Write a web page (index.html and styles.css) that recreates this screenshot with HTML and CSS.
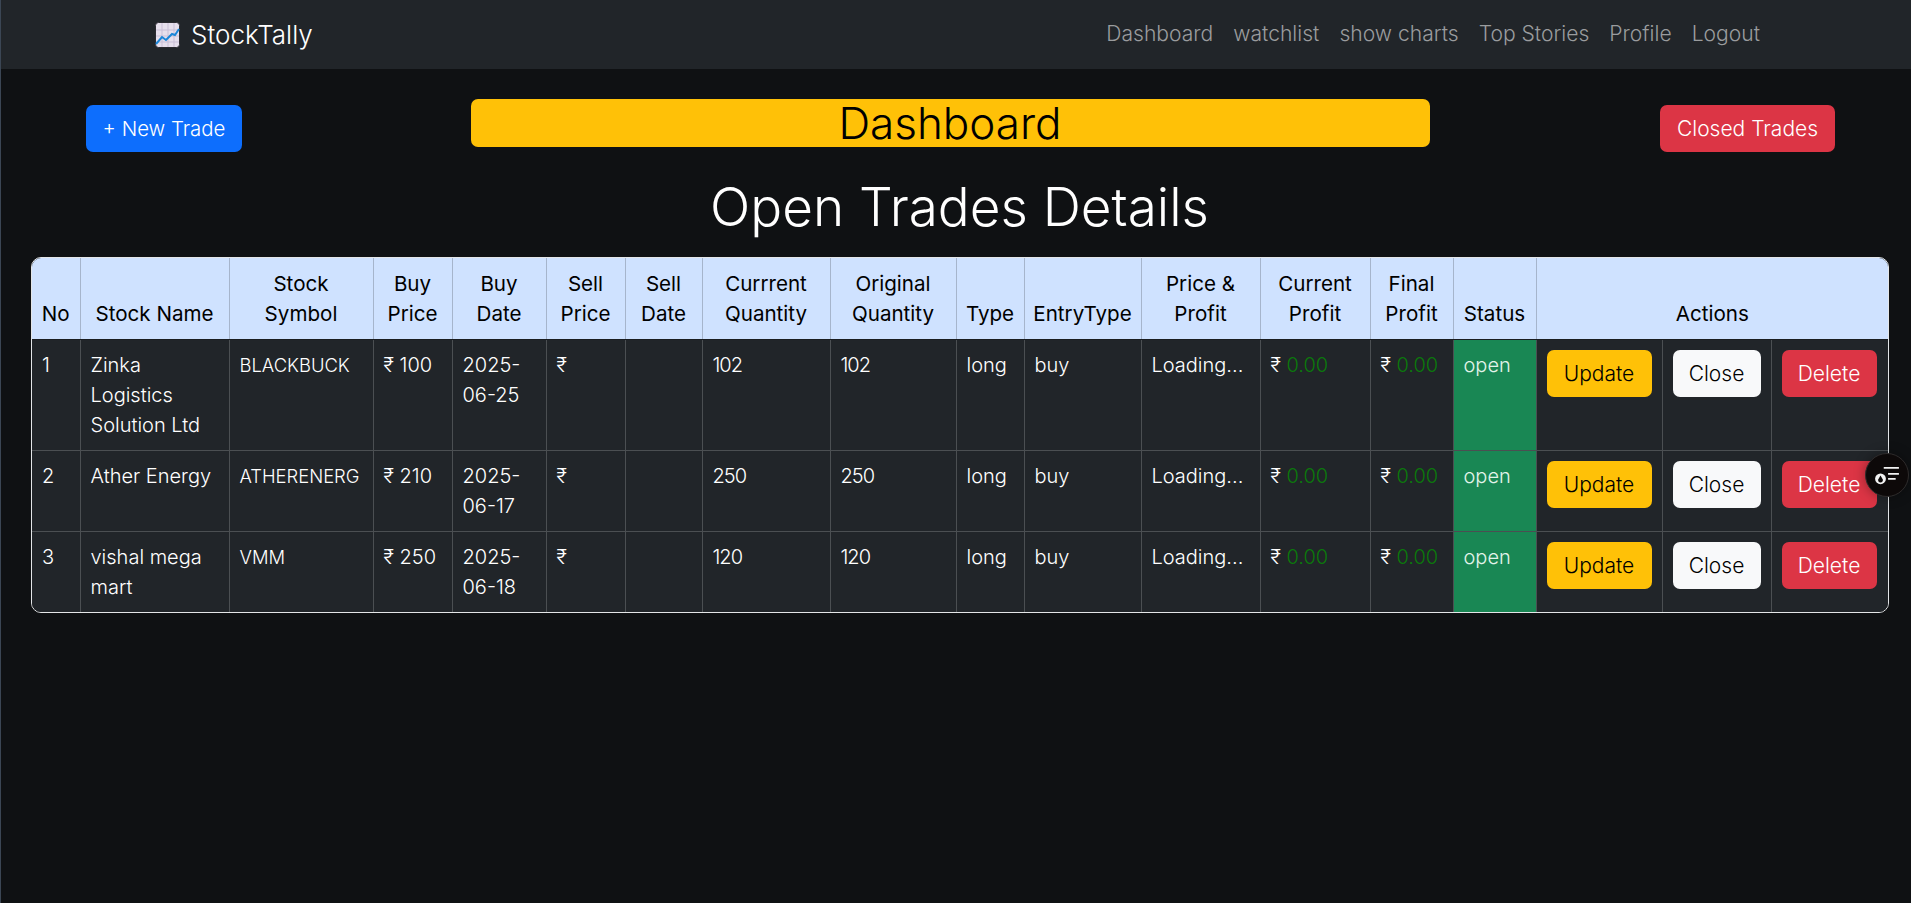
FILE: index.html
```html
<!doctype html>
<html>
  <head>
    <title>StockTally</title>
    <link rel="stylesheet" href="styles.css">
  </head>
  <body>
    <nav class="navbar">
      <a class="brand" href="#">
        <svg class="brand-icon" viewBox="0 0 25 26" width="25" height="26">
          <rect x="0.5" y="0.5" width="24" height="25" rx="3" fill="#e6dfec" stroke="#2b2b30" />
          <path d="M1 8h23M1 14h23M1 20h23M7 1v24M13 1v24M19 1v24" stroke="#c9bfd6" stroke-width="1" fill="none" />
          <path d="M1 22l6-7 4 3 6-6 3 1 4-6" stroke="#1a86d8" stroke-width="2" fill="none" />
        </svg>
        <span>StockTally</span>
      </a>
      <ul class="nav-links">
        <li><a href="#">Dashboard</a></li>
        <li><a href="#">watchlist</a></li>
        <li><a href="#">show charts</a></li>
        <li><a href="#">Top Stories</a></li>
        <li><a href="#">Profile</a></li>
        <li><a href="#">Logout</a></li>
      </ul>
    </nav>

    <div class="top-row">
      <button class="btn btn-blue btn-new">+ New Trade</button>
      <div class="banner">Dashboard</div>
      <button class="btn btn-red btn-closed">Closed Trades</button>
    </div>

    <h1 class="page-title">Open Trades Details</h1>

    <div class="table-wrap">
      <table>
        <colgroup>
          <col class="c-no" /><col class="c-name" /><col class="c-symbol" /><col class="c-buy" />
          <col class="c-date" /><col class="c-sell" /><col class="c-selldate" /><col class="c-qty" />
          <col class="c-orig" /><col class="c-type" /><col class="c-entry" /><col class="c-price" />
          <col class="c-profit" /><col class="c-final" /><col class="c-status" /><col class="c-update" />
          <col class="c-close" /><col class="c-delete" />
        </colgroup>
        <thead>
          <tr>
            <th class="tight">No</th>
            <th class="tight">Stock Name</th>
            <th>Stock Symbol</th>
            <th class="tight">Buy Price</th>
            <th>Buy Date</th>
            <th class="tight">Sell Price</th>
            <th class="tight">Sell Date</th>
            <th class="tight">Currrent Quantity</th>
            <th class="tight">Original Quantity</th>
            <th class="tight">Type</th>
            <th class="tight">EntryType</th>
            <th class="tight">Price &amp; Profit</th>
            <th class="tight">Current Profit</th>
            <th class="tight">Final Profit</th>
            <th class="tight">Status</th>
            <th colspan="3">Actions</th>
          </tr>
        </thead>
        <tbody>
          <tr>
            <td>1</td>
            <td>Zinka Logistics Solution Ltd</td>
            <td class="symbol">BLACKBUCK</td>
            <td>₹ 100</td>
            <td>2025-06-25</td>
            <td>₹</td>
            <td></td>
            <td class="num">102</td>
            <td class="num">102</td>
            <td>long</td>
            <td>buy</td>
            <td>Loading...</td>
            <td>₹ <span class="profit">0.00</span></td>
            <td>₹ <span class="profit">0.00</span></td>
            <td class="status-open">open</td>
            <td><button class="btn btn-yellow btn-update">Update</button></td>
            <td><button class="btn btn-white btn-close">Close</button></td>
            <td><button class="btn btn-red btn-delete">Delete</button></td>
          </tr>
          <tr>
            <td>2</td>
            <td>Ather Energy</td>
            <td class="symbol">ATHERENERG</td>
            <td>₹ 210</td>
            <td>2025-06-17</td>
            <td>₹</td>
            <td></td>
            <td class="num">250</td>
            <td class="num">250</td>
            <td>long</td>
            <td>buy</td>
            <td>Loading...</td>
            <td>₹ <span class="profit">0.00</span></td>
            <td>₹ <span class="profit">0.00</span></td>
            <td class="status-open">open</td>
            <td><button class="btn btn-yellow btn-update">Update</button></td>
            <td><button class="btn btn-white btn-close">Close</button></td>
            <td><button class="btn btn-red btn-delete">Delete</button></td>
          </tr>
          <tr>
            <td>3</td>
            <td>vishal mega mart</td>
            <td class="symbol">VMM</td>
            <td>₹ 250</td>
            <td>2025-06-18</td>
            <td>₹</td>
            <td></td>
            <td class="num">120</td>
            <td class="num">120</td>
            <td>long</td>
            <td>buy</td>
            <td>Loading...</td>
            <td>₹ <span class="profit">0.00</span></td>
            <td>₹ <span class="profit">0.00</span></td>
            <td class="status-open">open</td>
            <td><button class="btn btn-yellow btn-update">Update</button></td>
            <td><button class="btn btn-white btn-close">Close</button></td>
            <td><button class="btn btn-red btn-delete">Delete</button></td>
          </tr>
        </tbody>
      </table>
    </div>

    <div class="float-widget">
      <svg viewBox="0 0 24 24" width="26" height="26">
        <path d="M9 5.5h14M13 11h10M13 15.5h7" stroke="#f2f2f2" stroke-width="1.6" fill="none" />
        <circle cx="6" cy="15.5" r="5" fill="#f2f2f2" />
        <path d="M6 12.5l2 3.4a2.2 2.2 0 1 1-4 0z" fill="#0d0909" />
      </svg>
    </div>
  </body>
</html>
```

FILE: styles.css
```css
body {
  margin: 0;
  min-height: 903px;
  box-sizing: border-box;
  border-left: 1px solid #3b4654;
  background-color: #0f1113;
  color: #fff;
  font-family: Inter, "Noto Sans", sans-serif;
  font-weight: 300;
}
a {
  text-decoration: none;
  color: inherit;
}
.navbar {
  display: flex;
  justify-content: space-between;
  align-items: center;
  height: 69px;
  padding: 0 151px 0 154px;
  background-color: #212529;
}
.brand {
  display: flex;
  align-items: center;
  gap: 11px;
  font-size: 26px;
}
.brand-icon {
  display: block;
}
.nav-links {
  display: flex;
  gap: 20px;
  margin: 0;
  padding: 0 0 2px;
  list-style: none;
  font-size: 21.1px;
  color: #9a9c9e;
}
.top-row {
  display: flex;
  justify-content: space-between;
  align-items: flex-start;
  padding: 30px 76px 0 85px;
}
.btn {
  height: 47px;
  padding: 0;
  border: 1px solid transparent;
  border-radius: 7px;
  font-family: inherit;
  font-size: 21px;
  font-weight: 300;
  line-height: 30px;
}
.btn-blue {
  background-color: #0d6efd;
  color: #fff;
}
.btn-red {
  background-color: #dc3545;
  color: #fff;
}
.btn-yellow {
  background-color: #ffc107;
  color: #000;
}
.btn-white {
  background-color: #f8f9fa;
  color: #000;
}
.btn-new {
  width: 156px;
  margin-top: 6px;
  font-size: 20.4px;
}
.btn-closed {
  width: 175px;
  margin-top: 6px;
}
.btn-update {
  width: 105px;
}
.btn-close {
  width: 88px;
}
.btn-delete {
  width: 95px;
}
.banner {
  width: 959px;
  height: 48px;
  margin-right: 2px;
  border-radius: 7px;
  background-color: #ffc107;
  color: #000;
  font-size: 44px;
  line-height: 48px;
  text-align: center;
}
.page-title {
  margin: 19px 0 14px;
  padding-left: 7px;
  font-size: 53px;
  font-weight: 300;
  line-height: 72px;
  text-align: center;
}
.table-wrap {
  margin: 0 22px 0 30px;
  border: 1px solid #e4e6e8;
  border-radius: 10px;
  overflow: hidden;
}
table {
  width: 100%;
  border-collapse: collapse;
  table-layout: fixed;
  font-size: 20px;
  line-height: 30px;
}
th,
td {
  padding: 10px;
  border: 1px solid #4b4f52;
  text-align: left;
  vertical-align: top;
  overflow-wrap: break-word;
}
th {
  padding-top: 11px;
  background-color: #cfe2ff;
  border-color: #a6b5cc;
  color: #000;
  font-size: 20.6px;
  font-weight: 400;
  text-align: center;
  vertical-align: bottom;
}
th.tight {
  padding-left: 2px;
  padding-right: 2px;
}
td {
  background-color: #212529;
}
tr > :first-child {
  border-left: 0;
}
tr > :last-child {
  border-right: 0;
}
thead th {
  border-top: 0;
  border-bottom-color: #1a1d20;
}
tbody tr:last-child td {
  border-bottom: 0;
}
.symbol {
  font-size: 18.4px;
}
.num {
  letter-spacing: -1px;
}
.status-open {
  background-color: #198754;
  color: #e3f4ea;
}
.profit {
  color: #0b7a0b;
}
.c-no { width: 48px; }
.c-name { width: 149px; }
.c-symbol { width: 144px; }
.c-buy { width: 79px; }
.c-date { width: 94px; }
.c-sell { width: 79px; }
.c-selldate { width: 77px; }
.c-qty { width: 128px; }
.c-orig { width: 126px; }
.c-type { width: 68px; }
.c-entry { width: 117px; }
.c-price { width: 119px; }
.c-profit { width: 110px; }
.c-final { width: 83px; }
.c-status { width: 83px; }
.c-update { width: 126px; }
.c-close { width: 109px; }
.c-delete { width: 117px; }
.float-widget {
  position: absolute;
  left: 1865px;
  top: 453px;
  display: flex;
  align-items: center;
  justify-content: center;
  box-sizing: border-box;
  width: 44px;
  height: 44px;
  border: 1px solid #2e2b2b;
  border-radius: 50%;
  background-color: #0d0909;
  box-shadow: 0 0 12px rgba(0, 0, 0, 0.35);
}
```
